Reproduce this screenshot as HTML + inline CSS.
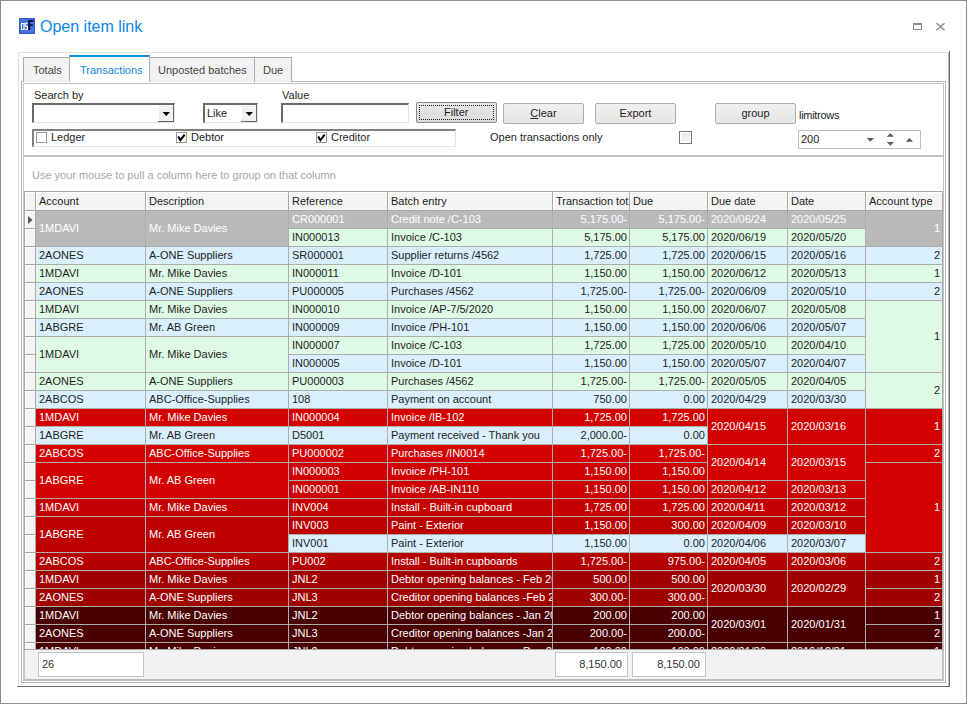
<!DOCTYPE html>
<html><head><meta charset="utf-8">
<style>
*{box-sizing:border-box;margin:0;padding:0}
html,body{width:967px;height:704px;overflow:hidden;background:#fff;font-family:"Liberation Sans",sans-serif;font-size:11px;color:#1e1e1e}
.a{position:absolute}
.c{position:absolute;border-right:1px solid #adadad;border-bottom:1px solid #adadad;padding-left:3px;white-space:nowrap;overflow:hidden}
.c.n{text-align:right;padding-left:0;padding-right:2px}
.h{position:absolute;top:192px;height:18px;line-height:17px;padding-top:1px;padding-left:3px;border-right:1px solid #a9a9a9;white-space:nowrap;overflow:hidden;color:#1e1e1e;background:#f4f4f4;box-shadow:inset 1px 1px 0 #fff}
.ri{position:absolute;left:25px;width:11px;height:18px;background:#f4f4f4;border-right:1px solid #a9a9a9;border-bottom:1px solid #a9a9a9;box-shadow:inset 1px 1px 0 #fff}
.t{position:absolute;white-space:nowrap;line-height:13px}
.btn{position:absolute;border:1px solid #acacac;background:linear-gradient(#f0f0f0,#e5e5e5);text-align:center;line-height:18px;color:#1e1e1e}
.cb{position:absolute;width:11px;height:11px;border:1px solid #999;background:#fff}
</style></head><body>
<!-- window border -->
<div class="a" style="left:0;top:0;width:967px;height:704px;border:1px solid #8c8c8c"></div>
<!-- icon -->
<svg class="a" style="left:19px;top:18px" width="16" height="16"><rect x="0.5" y="0.5" width="15" height="15" fill="#4272e2" stroke="#2f5cc8"/><path d="M2.5 5.5 h2.5 v6 h-2.5 z" fill="none" stroke="#fff" stroke-width="1.1"/><path d="M8.8 5.2 h-2.6 v3 h2.3 v3 h-2.6" fill="none" stroke="#fff" stroke-width="1.1"/><path d="M10.2 12 V3 h4.2 M10.2 7.2 h3.6" fill="none" stroke="#0c0c40" stroke-width="1.8"/></svg>
<!-- title -->
<div class="t" style="left:40px;top:17px;font-size:16px;line-height:19px;color:#0e86e0">Open item link</div>
<!-- max/close -->
<div class="a" style="left:913px;top:23px;width:9px;height:7px;border:1px solid #8a8a8a;border-top-width:2px"></div>
<svg class="a" style="left:936px;top:23px" width="9" height="8"><path d="M0.5 0.3 L8.5 7.2 M8.5 0.3 L0.5 7.2" stroke="#8a8a8a" stroke-width="1.5"/></svg>
<!-- outer panel -->
<div class="a" style="left:18px;top:52px;width:931px;height:635px;border-left:1px solid #dcdcdc;border-top:1px solid #dcdcdc;border-right:1px solid #bdbdbd;border-bottom:1px solid #bdbdbd"></div>
<div class="a" style="left:949px;top:51px;width:1px;height:636px;background:#6e6e6e"></div>
<div class="a" style="left:17px;top:686px;width:933px;height:1px;background:#6e6e6e"></div>
<!-- tab page borders -->
<div class="a" style="left:21px;top:81px;width:925px;height:602px;border:1px solid #b8b8b8"></div>
<div class="a" style="left:23px;top:83px;width:921px;height:598px;border:1px solid #c4c4c4"></div>
<!-- tabs -->
<div class="a" style="left:23px;top:57px;width:47px;height:25px;background:#f2f2f2;border:1px solid #adadad;border-bottom:none"></div>
<div class="t" style="left:33px;top:64px;color:#444">Totals</div>
<div class="a" style="left:69px;top:55px;width:81px;height:27px;background:#fff;border-left:1px solid #adadad;border-right:1px solid #adadad;border-top:2px solid #0e90e8"></div>
<div class="t" style="left:80px;top:64px;color:#0e86e0">Transactions</div>
<div class="a" style="left:149px;top:57px;width:106px;height:25px;background:#f2f2f2;border:1px solid #adadad;border-bottom:none"></div>
<div class="t" style="left:158px;top:64px;color:#444">Unposted batches</div>
<div class="a" style="left:254px;top:57px;width:38px;height:25px;background:#f2f2f2;border:1px solid #adadad;border-bottom:none"></div>
<div class="t" style="left:263px;top:64px;color:#444">Due</div>
<!-- filter area -->
<div class="t" style="left:34px;top:89px">Search by</div>
<div class="a" style="left:32px;top:103px;width:143px;height:20px;border-top:2px solid #696969;border-left:2px solid #696969;border-right:1px solid #e3e3e3;border-bottom:1px solid #e3e3e3;background:#fff"></div>
<div class="a" style="left:158px;top:105px;width:16px;height:17px;background:#f0f0f0;border-right:1px solid #696969;border-bottom:1px solid #696969;box-shadow:inset 1px 1px 0 #fff"></div>
<svg class="a" style="left:162px;top:111px" width="9" height="6"><path d="M0.5 1 L8 1 L4.25 5 Z" fill="#000"/></svg>
<div class="a" style="left:203px;top:103px;width:55px;height:20px;border-top:2px solid #696969;border-left:2px solid #696969;border-right:1px solid #e3e3e3;border-bottom:1px solid #e3e3e3;background:#fff"></div>
<div class="t" style="left:207px;top:107px">Like</div>
<div class="a" style="left:241px;top:105px;width:16px;height:17px;background:#f0f0f0;border-right:1px solid #696969;border-bottom:1px solid #696969;box-shadow:inset 1px 1px 0 #fff"></div>
<svg class="a" style="left:245px;top:111px" width="9" height="6"><path d="M0.5 1 L8 1 L4.25 5 Z" fill="#000"/></svg>
<div class="t" style="left:282px;top:89px">Value</div>
<div class="a" style="left:281px;top:103px;width:128px;height:20px;border-top:2px solid #696969;border-left:2px solid #696969;border-right:1px solid #e3e3e3;border-bottom:1px solid #e3e3e3;background:#fff"></div>
<div class="btn" style="left:416px;top:102px;width:81px;height:21px;border-color:#888;border-radius:2px;background:linear-gradient(#e8e8e8,#dcdcdc)"></div>
<div class="a" style="left:419px;top:105px;width:75px;height:15px;border:1px dotted #222"></div>
<div class="t" style="left:444px;top:106px">Filter</div>
<div class="btn" style="left:503px;top:103px;width:81px;height:21px;border-radius:2px"><span style="text-decoration:underline">C</span>lear</div>
<div class="btn" style="left:595px;top:103px;width:81px;height:21px;border-radius:2px">Export</div>
<div class="btn" style="left:715px;top:103px;width:81px;height:21px;border-radius:2px">group</div>
<div class="t" style="left:799px;top:109px;letter-spacing:-0.3px">limitrows</div>
<!-- checkbox group -->
<div class="a" style="left:32px;top:129px;width:424px;height:18px;border-top:2px solid #808080;border-left:2px solid #808080;border-right:1px solid #e3e3e3;border-bottom:1px solid #e3e3e3"></div>
<div class="cb" style="left:36px;top:132px"></div>
<div class="t" style="left:51px;top:131px">Ledger</div>
<div class="cb" style="left:176px;top:132px"></div>
<svg class="a" style="left:176px;top:132px" width="11" height="11"><path d="M2.2 4.6 L4.3 8.2 L8.7 2.6" stroke="#000" stroke-width="2" fill="none"/></svg>
<div class="t" style="left:191px;top:131px">Debtor</div>
<div class="cb" style="left:316px;top:132px"></div>
<svg class="a" style="left:316px;top:132px" width="11" height="11"><path d="M2.2 4.6 L4.3 8.2 L8.7 2.6" stroke="#000" stroke-width="2" fill="none"/></svg>
<div class="t" style="left:331px;top:131px">Creditor</div>
<div class="t" style="left:490px;top:131px">Open transactions only</div>
<div class="cb" style="left:679px;top:131px;border-color:#777;width:13px;height:13px;background:linear-gradient(#e6e6e6,#f8f8f8);box-shadow:inset 0 0 0 1px #fff"></div>
<!-- spin -->
<div class="a" style="left:798px;top:130px;width:123px;height:19px;border:1px solid #bdbdbd;background:#fff"></div>
<div class="t" style="left:801px;top:133px">200</div>
<svg class="a" style="left:866px;top:132px" width="50" height="15"><path d="M0.7 6 L8 6 L4.35 9.8 Z M20.7 4.8 L28 4.8 L24.35 1.2 Z M20.7 10 L28 10 L24.35 13.8 Z M39.8 9.8 L47 9.8 L43.4 6 Z" fill="#5a5a5a"/></svg>
<!-- filter box bottom -->
<div class="a" style="left:24px;top:155px;width:919px;height:2px;background:#c0c0c0"></div>
<div class="t" style="left:32px;top:169px;color:#a6a6a6">Use your mouse to pull a column here to group on that column</div>
<!-- grid -->
<div class="a" style="left:24px;top:191px;width:919px;height:459px;border:1px solid #a9a9a9;background:#f4f4f4"></div>
<div class="a" style="left:25px;top:192px;width:11px;height:18px;background:#f4f4f4;border-right:1px solid #a9a9a9;box-shadow:inset 1px 1px 0 #fff"></div>
<div class="h" style="left:36px;width:110px">Account</div>
<div class="h" style="left:146px;width:143px">Description</div>
<div class="h" style="left:289px;width:99px">Reference</div>
<div class="h" style="left:388px;width:165px">Batch entry</div>
<div class="h" style="left:553px;width:77px">Transaction tot</div>
<div class="h" style="left:630px;width:78px">Due</div>
<div class="h" style="left:708px;width:80px">Due date</div>
<div class="h" style="left:788px;width:78px">Date</div>
<div class="h" style="left:866px;width:77px">Account type</div>
<div class="a" style="left:25px;top:210px;width:917px;height:1px;background:#a9a9a9"></div>
<div class="a" style="left:25px;top:211px;width:917px;height:438px;overflow:hidden">
<div class="a" style="left:-25px;top:-211px;width:967px;height:704px">
<div class="ri" style="top:211px"></div>
<div class="ri" style="top:229px"></div>
<div class="ri" style="top:247px"></div>
<div class="ri" style="top:265px"></div>
<div class="ri" style="top:283px"></div>
<div class="ri" style="top:301px"></div>
<div class="ri" style="top:319px"></div>
<div class="ri" style="top:337px"></div>
<div class="ri" style="top:355px"></div>
<div class="ri" style="top:373px"></div>
<div class="ri" style="top:391px"></div>
<div class="ri" style="top:409px"></div>
<div class="ri" style="top:427px"></div>
<div class="ri" style="top:445px"></div>
<div class="ri" style="top:463px"></div>
<div class="ri" style="top:481px"></div>
<div class="ri" style="top:499px"></div>
<div class="ri" style="top:517px"></div>
<div class="ri" style="top:535px"></div>
<div class="ri" style="top:553px"></div>
<div class="ri" style="top:571px"></div>
<div class="ri" style="top:589px"></div>
<div class="ri" style="top:607px"></div>
<div class="ri" style="top:625px"></div>
<div class="ri" style="top:643px"></div>
<div class="c" style="left:36px;top:211px;width:110px;height:36px;background:#bababa;color:#ffffff;line-height:35px">1MDAVI</div>
<div class="c" style="left:146px;top:211px;width:143px;height:36px;background:#bababa;color:#ffffff;line-height:35px">Mr. Mike Davies</div>
<div class="c" style="left:36px;top:247px;width:110px;height:18px;background:#d9effd;color:#1e1e1e;line-height:17px">2AONES</div>
<div class="c" style="left:146px;top:247px;width:143px;height:18px;background:#d9effd;color:#1e1e1e;line-height:17px">A-ONE Suppliers</div>
<div class="c" style="left:36px;top:265px;width:110px;height:18px;background:#dffae4;color:#1e1e1e;line-height:17px">1MDAVI</div>
<div class="c" style="left:146px;top:265px;width:143px;height:18px;background:#dffae4;color:#1e1e1e;line-height:17px">Mr. Mike Davies</div>
<div class="c" style="left:36px;top:283px;width:110px;height:18px;background:#d9effd;color:#1e1e1e;line-height:17px">2AONES</div>
<div class="c" style="left:146px;top:283px;width:143px;height:18px;background:#d9effd;color:#1e1e1e;line-height:17px">A-ONE Suppliers</div>
<div class="c" style="left:36px;top:301px;width:110px;height:18px;background:#dffae4;color:#1e1e1e;line-height:17px">1MDAVI</div>
<div class="c" style="left:146px;top:301px;width:143px;height:18px;background:#dffae4;color:#1e1e1e;line-height:17px">Mr. Mike Davies</div>
<div class="c" style="left:36px;top:319px;width:110px;height:18px;background:#d9effd;color:#1e1e1e;line-height:17px">1ABGRE</div>
<div class="c" style="left:146px;top:319px;width:143px;height:18px;background:#d9effd;color:#1e1e1e;line-height:17px">Mr. AB Green</div>
<div class="c" style="left:36px;top:337px;width:110px;height:36px;background:#dffae4;color:#1e1e1e;line-height:35px">1MDAVI</div>
<div class="c" style="left:146px;top:337px;width:143px;height:36px;background:#dffae4;color:#1e1e1e;line-height:35px">Mr. Mike Davies</div>
<div class="c" style="left:36px;top:373px;width:110px;height:18px;background:#dffae4;color:#1e1e1e;line-height:17px">2AONES</div>
<div class="c" style="left:146px;top:373px;width:143px;height:18px;background:#dffae4;color:#1e1e1e;line-height:17px">A-ONE Suppliers</div>
<div class="c" style="left:36px;top:391px;width:110px;height:18px;background:#d9effd;color:#1e1e1e;line-height:17px">2ABCOS</div>
<div class="c" style="left:146px;top:391px;width:143px;height:18px;background:#d9effd;color:#1e1e1e;line-height:17px">ABC-Office-Supplies</div>
<div class="c" style="left:36px;top:409px;width:110px;height:18px;background:#d40000;color:#ffffff;line-height:17px">1MDAVI</div>
<div class="c" style="left:146px;top:409px;width:143px;height:18px;background:#d40000;color:#ffffff;line-height:17px">Mr. Mike Davies</div>
<div class="c" style="left:36px;top:427px;width:110px;height:18px;background:#d9effd;color:#1e1e1e;line-height:17px">1ABGRE</div>
<div class="c" style="left:146px;top:427px;width:143px;height:18px;background:#d9effd;color:#1e1e1e;line-height:17px">Mr. AB Green</div>
<div class="c" style="left:36px;top:445px;width:110px;height:18px;background:#d40000;color:#ffffff;line-height:17px">2ABCOS</div>
<div class="c" style="left:146px;top:445px;width:143px;height:18px;background:#d40000;color:#ffffff;line-height:17px">ABC-Office-Supplies</div>
<div class="c" style="left:36px;top:463px;width:110px;height:36px;background:#d40000;color:#ffffff;line-height:35px">1ABGRE</div>
<div class="c" style="left:146px;top:463px;width:143px;height:36px;background:#d40000;color:#ffffff;line-height:35px">Mr. AB Green</div>
<div class="c" style="left:36px;top:499px;width:110px;height:18px;background:#c40000;color:#ffffff;line-height:17px">1MDAVI</div>
<div class="c" style="left:146px;top:499px;width:143px;height:18px;background:#c40000;color:#ffffff;line-height:17px">Mr. Mike Davies</div>
<div class="c" style="left:36px;top:517px;width:110px;height:36px;background:#bc0000;color:#ffffff;line-height:35px">1ABGRE</div>
<div class="c" style="left:146px;top:517px;width:143px;height:36px;background:#bc0000;color:#ffffff;line-height:35px">Mr. AB Green</div>
<div class="c" style="left:36px;top:553px;width:110px;height:18px;background:#b60000;color:#ffffff;line-height:17px">2ABCOS</div>
<div class="c" style="left:146px;top:553px;width:143px;height:18px;background:#b60000;color:#ffffff;line-height:17px">ABC-Office-Supplies</div>
<div class="c" style="left:36px;top:571px;width:110px;height:18px;background:#a00000;color:#ffffff;line-height:17px">1MDAVI</div>
<div class="c" style="left:146px;top:571px;width:143px;height:18px;background:#a00000;color:#ffffff;line-height:17px">Mr. Mike Davies</div>
<div class="c" style="left:36px;top:589px;width:110px;height:18px;background:#a00000;color:#ffffff;line-height:17px">2AONES</div>
<div class="c" style="left:146px;top:589px;width:143px;height:18px;background:#a00000;color:#ffffff;line-height:17px">A-ONE Suppliers</div>
<div class="c" style="left:36px;top:607px;width:110px;height:18px;background:#4a0000;color:#ffffff;line-height:17px">1MDAVI</div>
<div class="c" style="left:146px;top:607px;width:143px;height:18px;background:#4a0000;color:#ffffff;line-height:17px">Mr. Mike Davies</div>
<div class="c" style="left:36px;top:625px;width:110px;height:18px;background:#4a0000;color:#ffffff;line-height:17px">2AONES</div>
<div class="c" style="left:146px;top:625px;width:143px;height:18px;background:#4a0000;color:#ffffff;line-height:17px">A-ONE Suppliers</div>
<div class="c" style="left:36px;top:643px;width:110px;height:18px;background:#4a0000;color:#ffffff;line-height:17px">1MDAVI</div>
<div class="c" style="left:146px;top:643px;width:143px;height:18px;background:#4a0000;color:#ffffff;line-height:17px">Mr. Mike Davies</div>
<div class="c" style="left:289px;top:211px;width:99px;height:18px;background:#bababa;color:#ffffff;line-height:17px">CR000001</div>
<div class="c" style="left:388px;top:211px;width:165px;height:18px;background:#bababa;color:#ffffff;line-height:17px">Credit note /C-103</div>
<div class="c n" style="left:553px;top:211px;width:77px;height:18px;background:#bababa;color:#ffffff;line-height:17px">5,175.00-</div>
<div class="c n" style="left:630px;top:211px;width:78px;height:18px;background:#bababa;color:#ffffff;line-height:17px">5,175.00-</div>
<div class="c" style="left:289px;top:229px;width:99px;height:18px;background:#dffae4;color:#1e1e1e;line-height:17px">IN000013</div>
<div class="c" style="left:388px;top:229px;width:165px;height:18px;background:#dffae4;color:#1e1e1e;line-height:17px">Invoice /C-103</div>
<div class="c n" style="left:553px;top:229px;width:77px;height:18px;background:#dffae4;color:#1e1e1e;line-height:17px">5,175.00</div>
<div class="c n" style="left:630px;top:229px;width:78px;height:18px;background:#dffae4;color:#1e1e1e;line-height:17px">5,175.00</div>
<div class="c" style="left:289px;top:247px;width:99px;height:18px;background:#d9effd;color:#1e1e1e;line-height:17px">SR000001</div>
<div class="c" style="left:388px;top:247px;width:165px;height:18px;background:#d9effd;color:#1e1e1e;line-height:17px">Supplier returns /4562</div>
<div class="c n" style="left:553px;top:247px;width:77px;height:18px;background:#d9effd;color:#1e1e1e;line-height:17px">1,725.00</div>
<div class="c n" style="left:630px;top:247px;width:78px;height:18px;background:#d9effd;color:#1e1e1e;line-height:17px">1,725.00</div>
<div class="c" style="left:289px;top:265px;width:99px;height:18px;background:#dffae4;color:#1e1e1e;line-height:17px">IN000011</div>
<div class="c" style="left:388px;top:265px;width:165px;height:18px;background:#dffae4;color:#1e1e1e;line-height:17px">Invoice /D-101</div>
<div class="c n" style="left:553px;top:265px;width:77px;height:18px;background:#dffae4;color:#1e1e1e;line-height:17px">1,150.00</div>
<div class="c n" style="left:630px;top:265px;width:78px;height:18px;background:#dffae4;color:#1e1e1e;line-height:17px">1,150.00</div>
<div class="c" style="left:289px;top:283px;width:99px;height:18px;background:#d9effd;color:#1e1e1e;line-height:17px">PU000005</div>
<div class="c" style="left:388px;top:283px;width:165px;height:18px;background:#d9effd;color:#1e1e1e;line-height:17px">Purchases /4562</div>
<div class="c n" style="left:553px;top:283px;width:77px;height:18px;background:#d9effd;color:#1e1e1e;line-height:17px">1,725.00-</div>
<div class="c n" style="left:630px;top:283px;width:78px;height:18px;background:#d9effd;color:#1e1e1e;line-height:17px">1,725.00-</div>
<div class="c" style="left:289px;top:301px;width:99px;height:18px;background:#dffae4;color:#1e1e1e;line-height:17px">IN000010</div>
<div class="c" style="left:388px;top:301px;width:165px;height:18px;background:#dffae4;color:#1e1e1e;line-height:17px">Invoice /AP-7/5/2020</div>
<div class="c n" style="left:553px;top:301px;width:77px;height:18px;background:#dffae4;color:#1e1e1e;line-height:17px">1,150.00</div>
<div class="c n" style="left:630px;top:301px;width:78px;height:18px;background:#dffae4;color:#1e1e1e;line-height:17px">1,150.00</div>
<div class="c" style="left:289px;top:319px;width:99px;height:18px;background:#d9effd;color:#1e1e1e;line-height:17px">IN000009</div>
<div class="c" style="left:388px;top:319px;width:165px;height:18px;background:#d9effd;color:#1e1e1e;line-height:17px">Invoice /PH-101</div>
<div class="c n" style="left:553px;top:319px;width:77px;height:18px;background:#d9effd;color:#1e1e1e;line-height:17px">1,150.00</div>
<div class="c n" style="left:630px;top:319px;width:78px;height:18px;background:#d9effd;color:#1e1e1e;line-height:17px">1,150.00</div>
<div class="c" style="left:289px;top:337px;width:99px;height:18px;background:#dffae4;color:#1e1e1e;line-height:17px">IN000007</div>
<div class="c" style="left:388px;top:337px;width:165px;height:18px;background:#dffae4;color:#1e1e1e;line-height:17px">Invoice /C-103</div>
<div class="c n" style="left:553px;top:337px;width:77px;height:18px;background:#dffae4;color:#1e1e1e;line-height:17px">1,725.00</div>
<div class="c n" style="left:630px;top:337px;width:78px;height:18px;background:#dffae4;color:#1e1e1e;line-height:17px">1,725.00</div>
<div class="c" style="left:289px;top:355px;width:99px;height:18px;background:#d9effd;color:#1e1e1e;line-height:17px">IN000005</div>
<div class="c" style="left:388px;top:355px;width:165px;height:18px;background:#d9effd;color:#1e1e1e;line-height:17px">Invoice /D-101</div>
<div class="c n" style="left:553px;top:355px;width:77px;height:18px;background:#d9effd;color:#1e1e1e;line-height:17px">1,150.00</div>
<div class="c n" style="left:630px;top:355px;width:78px;height:18px;background:#d9effd;color:#1e1e1e;line-height:17px">1,150.00</div>
<div class="c" style="left:289px;top:373px;width:99px;height:18px;background:#dffae4;color:#1e1e1e;line-height:17px">PU000003</div>
<div class="c" style="left:388px;top:373px;width:165px;height:18px;background:#dffae4;color:#1e1e1e;line-height:17px">Purchases /4562</div>
<div class="c n" style="left:553px;top:373px;width:77px;height:18px;background:#dffae4;color:#1e1e1e;line-height:17px">1,725.00-</div>
<div class="c n" style="left:630px;top:373px;width:78px;height:18px;background:#dffae4;color:#1e1e1e;line-height:17px">1,725.00-</div>
<div class="c" style="left:289px;top:391px;width:99px;height:18px;background:#d9effd;color:#1e1e1e;line-height:17px">108</div>
<div class="c" style="left:388px;top:391px;width:165px;height:18px;background:#d9effd;color:#1e1e1e;line-height:17px">Payment on account</div>
<div class="c n" style="left:553px;top:391px;width:77px;height:18px;background:#d9effd;color:#1e1e1e;line-height:17px">750.00</div>
<div class="c n" style="left:630px;top:391px;width:78px;height:18px;background:#d9effd;color:#1e1e1e;line-height:17px">0.00</div>
<div class="c" style="left:289px;top:409px;width:99px;height:18px;background:#d40000;color:#ffffff;line-height:17px">IN000004</div>
<div class="c" style="left:388px;top:409px;width:165px;height:18px;background:#d40000;color:#ffffff;line-height:17px">Invoice /IB-102</div>
<div class="c n" style="left:553px;top:409px;width:77px;height:18px;background:#d40000;color:#ffffff;line-height:17px">1,725.00</div>
<div class="c n" style="left:630px;top:409px;width:78px;height:18px;background:#d40000;color:#ffffff;line-height:17px">1,725.00</div>
<div class="c" style="left:289px;top:427px;width:99px;height:18px;background:#d9effd;color:#1e1e1e;line-height:17px">D5001</div>
<div class="c" style="left:388px;top:427px;width:165px;height:18px;background:#d9effd;color:#1e1e1e;line-height:17px">Payment received - Thank you</div>
<div class="c n" style="left:553px;top:427px;width:77px;height:18px;background:#d9effd;color:#1e1e1e;line-height:17px">2,000.00-</div>
<div class="c n" style="left:630px;top:427px;width:78px;height:18px;background:#d9effd;color:#1e1e1e;line-height:17px">0.00</div>
<div class="c" style="left:289px;top:445px;width:99px;height:18px;background:#d40000;color:#ffffff;line-height:17px">PU000002</div>
<div class="c" style="left:388px;top:445px;width:165px;height:18px;background:#d40000;color:#ffffff;line-height:17px">Purchases /IN0014</div>
<div class="c n" style="left:553px;top:445px;width:77px;height:18px;background:#d40000;color:#ffffff;line-height:17px">1,725.00-</div>
<div class="c n" style="left:630px;top:445px;width:78px;height:18px;background:#d40000;color:#ffffff;line-height:17px">1,725.00-</div>
<div class="c" style="left:289px;top:463px;width:99px;height:18px;background:#d00000;color:#ffffff;line-height:17px">IN000003</div>
<div class="c" style="left:388px;top:463px;width:165px;height:18px;background:#d00000;color:#ffffff;line-height:17px">Invoice /PH-101</div>
<div class="c n" style="left:553px;top:463px;width:77px;height:18px;background:#d00000;color:#ffffff;line-height:17px">1,150.00</div>
<div class="c n" style="left:630px;top:463px;width:78px;height:18px;background:#d00000;color:#ffffff;line-height:17px">1,150.00</div>
<div class="c" style="left:289px;top:481px;width:99px;height:18px;background:#cc0000;color:#ffffff;line-height:17px">IN000001</div>
<div class="c" style="left:388px;top:481px;width:165px;height:18px;background:#cc0000;color:#ffffff;line-height:17px">Invoice /AB-IN110</div>
<div class="c n" style="left:553px;top:481px;width:77px;height:18px;background:#cc0000;color:#ffffff;line-height:17px">1,150.00</div>
<div class="c n" style="left:630px;top:481px;width:78px;height:18px;background:#cc0000;color:#ffffff;line-height:17px">1,150.00</div>
<div class="c" style="left:289px;top:499px;width:99px;height:18px;background:#c40000;color:#ffffff;line-height:17px">INV004</div>
<div class="c" style="left:388px;top:499px;width:165px;height:18px;background:#c40000;color:#ffffff;line-height:17px">Install - Built-in cupboard</div>
<div class="c n" style="left:553px;top:499px;width:77px;height:18px;background:#c40000;color:#ffffff;line-height:17px">1,725.00</div>
<div class="c n" style="left:630px;top:499px;width:78px;height:18px;background:#c40000;color:#ffffff;line-height:17px">1,725.00</div>
<div class="c" style="left:289px;top:517px;width:99px;height:18px;background:#bc0000;color:#ffffff;line-height:17px">INV003</div>
<div class="c" style="left:388px;top:517px;width:165px;height:18px;background:#bc0000;color:#ffffff;line-height:17px">Paint - Exterior</div>
<div class="c n" style="left:553px;top:517px;width:77px;height:18px;background:#bc0000;color:#ffffff;line-height:17px">1,150.00</div>
<div class="c n" style="left:630px;top:517px;width:78px;height:18px;background:#bc0000;color:#ffffff;line-height:17px">300.00</div>
<div class="c" style="left:289px;top:535px;width:99px;height:18px;background:#d9effd;color:#1e1e1e;line-height:17px">INV001</div>
<div class="c" style="left:388px;top:535px;width:165px;height:18px;background:#d9effd;color:#1e1e1e;line-height:17px">Paint - Exterior</div>
<div class="c n" style="left:553px;top:535px;width:77px;height:18px;background:#d9effd;color:#1e1e1e;line-height:17px">1,150.00</div>
<div class="c n" style="left:630px;top:535px;width:78px;height:18px;background:#d9effd;color:#1e1e1e;line-height:17px">0.00</div>
<div class="c" style="left:289px;top:553px;width:99px;height:18px;background:#b60000;color:#ffffff;line-height:17px">PU002</div>
<div class="c" style="left:388px;top:553px;width:165px;height:18px;background:#b60000;color:#ffffff;line-height:17px">Install - Built-in cupboards</div>
<div class="c n" style="left:553px;top:553px;width:77px;height:18px;background:#b60000;color:#ffffff;line-height:17px">1,725.00-</div>
<div class="c n" style="left:630px;top:553px;width:78px;height:18px;background:#b60000;color:#ffffff;line-height:17px">975.00-</div>
<div class="c" style="left:289px;top:571px;width:99px;height:18px;background:#a00000;color:#ffffff;line-height:17px">JNL2</div>
<div class="c" style="left:388px;top:571px;width:165px;height:18px;background:#a00000;color:#ffffff;line-height:17px">Debtor opening balances - Feb 2020</div>
<div class="c n" style="left:553px;top:571px;width:77px;height:18px;background:#a00000;color:#ffffff;line-height:17px">500.00</div>
<div class="c n" style="left:630px;top:571px;width:78px;height:18px;background:#a00000;color:#ffffff;line-height:17px">500.00</div>
<div class="c" style="left:289px;top:589px;width:99px;height:18px;background:#a00000;color:#ffffff;line-height:17px">JNL3</div>
<div class="c" style="left:388px;top:589px;width:165px;height:18px;background:#a00000;color:#ffffff;line-height:17px">Creditor opening balances -Feb 2020</div>
<div class="c n" style="left:553px;top:589px;width:77px;height:18px;background:#a00000;color:#ffffff;line-height:17px">300.00-</div>
<div class="c n" style="left:630px;top:589px;width:78px;height:18px;background:#a00000;color:#ffffff;line-height:17px">300.00-</div>
<div class="c" style="left:289px;top:607px;width:99px;height:18px;background:#4a0000;color:#ffffff;line-height:17px">JNL2</div>
<div class="c" style="left:388px;top:607px;width:165px;height:18px;background:#4a0000;color:#ffffff;line-height:17px">Debtor opening balances - Jan 2020</div>
<div class="c n" style="left:553px;top:607px;width:77px;height:18px;background:#4a0000;color:#ffffff;line-height:17px">200.00</div>
<div class="c n" style="left:630px;top:607px;width:78px;height:18px;background:#4a0000;color:#ffffff;line-height:17px">200.00</div>
<div class="c" style="left:289px;top:625px;width:99px;height:18px;background:#4a0000;color:#ffffff;line-height:17px">JNL3</div>
<div class="c" style="left:388px;top:625px;width:165px;height:18px;background:#4a0000;color:#ffffff;line-height:17px">Creditor opening balances -Jan 2020</div>
<div class="c n" style="left:553px;top:625px;width:77px;height:18px;background:#4a0000;color:#ffffff;line-height:17px">200.00-</div>
<div class="c n" style="left:630px;top:625px;width:78px;height:18px;background:#4a0000;color:#ffffff;line-height:17px">200.00-</div>
<div class="c" style="left:289px;top:643px;width:99px;height:18px;background:#4a0000;color:#ffffff;line-height:17px">JNL2</div>
<div class="c" style="left:388px;top:643px;width:165px;height:18px;background:#4a0000;color:#ffffff;line-height:17px">Debtor opening balances - Dec 2019</div>
<div class="c n" style="left:553px;top:643px;width:77px;height:18px;background:#4a0000;color:#ffffff;line-height:17px">100.00</div>
<div class="c n" style="left:630px;top:643px;width:78px;height:18px;background:#4a0000;color:#ffffff;line-height:17px">100.00</div>
<div class="c" style="left:708px;top:211px;width:80px;height:18px;background:#bababa;color:#ffffff;line-height:17px">2020/06/24</div>
<div class="c" style="left:788px;top:211px;width:78px;height:18px;background:#bababa;color:#ffffff;line-height:17px">2020/05/25</div>
<div class="c" style="left:708px;top:229px;width:80px;height:18px;background:#dffae4;color:#1e1e1e;line-height:17px">2020/06/19</div>
<div class="c" style="left:788px;top:229px;width:78px;height:18px;background:#dffae4;color:#1e1e1e;line-height:17px">2020/05/20</div>
<div class="c" style="left:708px;top:247px;width:80px;height:18px;background:#d9effd;color:#1e1e1e;line-height:17px">2020/06/15</div>
<div class="c" style="left:788px;top:247px;width:78px;height:18px;background:#d9effd;color:#1e1e1e;line-height:17px">2020/05/16</div>
<div class="c" style="left:708px;top:265px;width:80px;height:18px;background:#dffae4;color:#1e1e1e;line-height:17px">2020/06/12</div>
<div class="c" style="left:788px;top:265px;width:78px;height:18px;background:#dffae4;color:#1e1e1e;line-height:17px">2020/05/13</div>
<div class="c" style="left:708px;top:283px;width:80px;height:18px;background:#d9effd;color:#1e1e1e;line-height:17px">2020/06/09</div>
<div class="c" style="left:788px;top:283px;width:78px;height:18px;background:#d9effd;color:#1e1e1e;line-height:17px">2020/05/10</div>
<div class="c" style="left:708px;top:301px;width:80px;height:18px;background:#dffae4;color:#1e1e1e;line-height:17px">2020/06/07</div>
<div class="c" style="left:788px;top:301px;width:78px;height:18px;background:#dffae4;color:#1e1e1e;line-height:17px">2020/05/08</div>
<div class="c" style="left:708px;top:319px;width:80px;height:18px;background:#d9effd;color:#1e1e1e;line-height:17px">2020/06/06</div>
<div class="c" style="left:788px;top:319px;width:78px;height:18px;background:#d9effd;color:#1e1e1e;line-height:17px">2020/05/07</div>
<div class="c" style="left:708px;top:337px;width:80px;height:18px;background:#dffae4;color:#1e1e1e;line-height:17px">2020/05/10</div>
<div class="c" style="left:788px;top:337px;width:78px;height:18px;background:#dffae4;color:#1e1e1e;line-height:17px">2020/04/10</div>
<div class="c" style="left:708px;top:355px;width:80px;height:18px;background:#d9effd;color:#1e1e1e;line-height:17px">2020/05/07</div>
<div class="c" style="left:788px;top:355px;width:78px;height:18px;background:#d9effd;color:#1e1e1e;line-height:17px">2020/04/07</div>
<div class="c" style="left:708px;top:373px;width:80px;height:18px;background:#dffae4;color:#1e1e1e;line-height:17px">2020/05/05</div>
<div class="c" style="left:788px;top:373px;width:78px;height:18px;background:#dffae4;color:#1e1e1e;line-height:17px">2020/04/05</div>
<div class="c" style="left:708px;top:391px;width:80px;height:18px;background:#d9effd;color:#1e1e1e;line-height:17px">2020/04/29</div>
<div class="c" style="left:788px;top:391px;width:78px;height:18px;background:#d9effd;color:#1e1e1e;line-height:17px">2020/03/30</div>
<div class="c" style="left:708px;top:409px;width:80px;height:36px;background:#d40000;color:#ffffff;line-height:35px">2020/04/15</div>
<div class="c" style="left:788px;top:409px;width:78px;height:36px;background:#d40000;color:#ffffff;line-height:35px">2020/03/16</div>
<div class="c" style="left:708px;top:445px;width:80px;height:36px;background:#d40000;color:#ffffff;line-height:35px">2020/04/14</div>
<div class="c" style="left:788px;top:445px;width:78px;height:36px;background:#d40000;color:#ffffff;line-height:35px">2020/03/15</div>
<div class="c" style="left:708px;top:481px;width:80px;height:18px;background:#cc0000;color:#ffffff;line-height:17px">2020/04/12</div>
<div class="c" style="left:788px;top:481px;width:78px;height:18px;background:#cc0000;color:#ffffff;line-height:17px">2020/03/13</div>
<div class="c" style="left:708px;top:499px;width:80px;height:18px;background:#c40000;color:#ffffff;line-height:17px">2020/04/11</div>
<div class="c" style="left:788px;top:499px;width:78px;height:18px;background:#c40000;color:#ffffff;line-height:17px">2020/03/12</div>
<div class="c" style="left:708px;top:517px;width:80px;height:18px;background:#bc0000;color:#ffffff;line-height:17px">2020/04/09</div>
<div class="c" style="left:788px;top:517px;width:78px;height:18px;background:#bc0000;color:#ffffff;line-height:17px">2020/03/10</div>
<div class="c" style="left:708px;top:535px;width:80px;height:18px;background:#d9effd;color:#1e1e1e;line-height:17px">2020/04/06</div>
<div class="c" style="left:788px;top:535px;width:78px;height:18px;background:#d9effd;color:#1e1e1e;line-height:17px">2020/03/07</div>
<div class="c" style="left:708px;top:553px;width:80px;height:18px;background:#b60000;color:#ffffff;line-height:17px">2020/04/05</div>
<div class="c" style="left:788px;top:553px;width:78px;height:18px;background:#b60000;color:#ffffff;line-height:17px">2020/03/06</div>
<div class="c" style="left:708px;top:571px;width:80px;height:36px;background:#a00000;color:#ffffff;line-height:35px">2020/03/30</div>
<div class="c" style="left:788px;top:571px;width:78px;height:36px;background:#a00000;color:#ffffff;line-height:35px">2020/02/29</div>
<div class="c" style="left:708px;top:607px;width:80px;height:36px;background:#4a0000;color:#ffffff;line-height:35px">2020/03/01</div>
<div class="c" style="left:788px;top:607px;width:78px;height:36px;background:#4a0000;color:#ffffff;line-height:35px">2020/01/31</div>
<div class="c" style="left:708px;top:643px;width:80px;height:18px;background:#4a0000;color:#ffffff;line-height:17px">2020/01/30</div>
<div class="c" style="left:788px;top:643px;width:78px;height:18px;background:#4a0000;color:#ffffff;line-height:17px">2019/12/31</div>
<div class="c n" style="left:866px;top:211px;width:77px;height:36px;background:#bababa;color:#ffffff;line-height:35px">1</div>
<div class="c n" style="left:866px;top:247px;width:77px;height:18px;background:#d9effd;color:#1e1e1e;line-height:17px">2</div>
<div class="c n" style="left:866px;top:265px;width:77px;height:18px;background:#dffae4;color:#1e1e1e;line-height:17px">1</div>
<div class="c n" style="left:866px;top:283px;width:77px;height:18px;background:#d9effd;color:#1e1e1e;line-height:17px">2</div>
<div class="c n" style="left:866px;top:301px;width:77px;height:72px;background:#dffae4;color:#1e1e1e;line-height:71px">1</div>
<div class="c n" style="left:866px;top:373px;width:77px;height:36px;background:#dffae4;color:#1e1e1e;line-height:35px">2</div>
<div class="c n" style="left:866px;top:409px;width:77px;height:36px;background:#d40000;color:#ffffff;line-height:35px">1</div>
<div class="c n" style="left:866px;top:445px;width:77px;height:18px;background:#d40000;color:#ffffff;line-height:17px">2</div>
<div class="c n" style="left:866px;top:463px;width:77px;height:90px;background:#d40000;color:#ffffff;line-height:89px">1</div>
<div class="c n" style="left:866px;top:553px;width:77px;height:18px;background:#b60000;color:#ffffff;line-height:17px">2</div>
<div class="c n" style="left:866px;top:571px;width:77px;height:18px;background:#a00000;color:#ffffff;line-height:17px">1</div>
<div class="c n" style="left:866px;top:589px;width:77px;height:18px;background:#a00000;color:#ffffff;line-height:17px">2</div>
<div class="c n" style="left:866px;top:607px;width:77px;height:18px;background:#4a0000;color:#ffffff;line-height:17px">1</div>
<div class="c n" style="left:866px;top:625px;width:77px;height:18px;background:#4a0000;color:#ffffff;line-height:17px">2</div>
<div class="c n" style="left:866px;top:643px;width:77px;height:18px;background:#4a0000;color:#ffffff;line-height:17px">1</div>
</div></div>
<svg class="a" style="left:28px;top:216px" width="5" height="8"><path d="M0 0 L4.5 4 L0 8 Z" fill="#555"/></svg>
<!-- footer -->
<div class="a" style="left:24px;top:650px;width:919px;height:30px;background:#f2f2f2;border-left:1px solid #c4c4c4;border-right:1px solid #c4c4c4;border-bottom:1px solid #bdbdbd"></div>
<div class="a" style="left:38px;top:652px;width:106px;height:25px;border:1px solid #c4c4c4;background:#fff"></div>
<div class="t" style="left:42px;top:658px;color:#333">26</div>
<div class="a" style="left:555px;top:652px;width:73px;height:25px;border:1px solid #c4c4c4;background:#fff;text-align:right;padding-right:5px;line-height:23px;color:#333">8,150.00</div>
<div class="a" style="left:632px;top:652px;width:74px;height:25px;border:1px solid #c4c4c4;background:#fff;text-align:right;padding-right:5px;line-height:23px;color:#333">8,150.00</div>
</body></html>
